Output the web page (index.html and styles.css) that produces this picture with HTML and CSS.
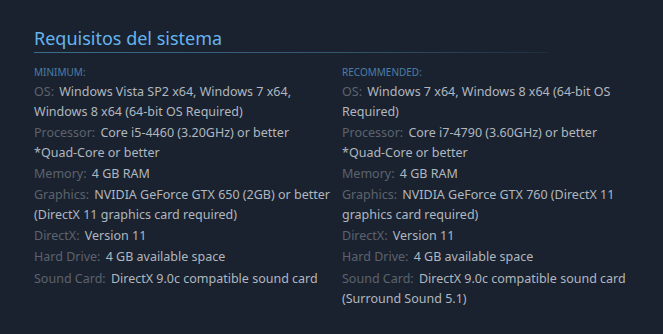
FILE: index.html
```html
<!DOCTYPE html>
<html lang="es">
<head>
<meta charset="utf-8">
<link rel="stylesheet" href="styles.css">
</head>
<body>
<section class="sysreq">
  <h2 class="sysreq-title">Requisitos del sistema</h2>
  <div class="sysreq-cols">
    <div class="sysreq-col">
      <div class="sysreq-head">Minimum:</div>
      <ul class="sysreq-list">
        <li><span class="lbl">OS:</span> Windows Vista SP2 x64, Windows 7 x64, Windows 8 x64 (64-bit OS Required)</li>
        <li><span class="lbl">Processor:</span> Core i5-4460 (3.20GHz) or better<br>*Quad-Core or better</li>
        <li><span class="lbl">Memory:</span> 4 GB RAM</li>
        <li><span class="lbl">Graphics:</span> NVIDIA GeForce GTX 650 (2GB) or better (DirectX 11 graphics card required)</li>
        <li><span class="lbl">DirectX:</span> Version 11</li>
        <li><span class="lbl">Hard Drive:</span> 4 GB available space</li>
        <li class="last"><span class="lbl">Sound Card:</span> DirectX 9.0c compatible sound card</li>
      </ul>
    </div>
    <div class="sysreq-col">
      <div class="sysreq-head">Recommended:</div>
      <ul class="sysreq-list">
        <li><span class="lbl">OS:</span> Windows 7 x64, Windows 8 x64 (64-bit OS Required)</li>
        <li><span class="lbl">Processor:</span> Core i7-4790 (3.60GHz) or better<br>*Quad-Core or better</li>
        <li><span class="lbl">Memory:</span> 4 GB RAM</li>
        <li><span class="lbl">Graphics:</span> NVIDIA GeForce GTX 760 (DirectX 11 graphics card required)</li>
        <li><span class="lbl">DirectX:</span> Version 11</li>
        <li><span class="lbl">Hard Drive:</span> 4 GB available space</li>
        <li class="last"><span class="lbl">Sound Card:</span> DirectX 9.0c compatible sound card (Surround Sound 5.1)</li>
      </ul>
    </div>
  </div>
</section>
</body>
</html>
```

FILE: styles.css
```css
html, body {
  margin: 0;
  padding: 0;
  background: #1a2230;
  height: 100%;
}
body {
  font-family: "Noto Sans", "Liberation Sans", Arial, sans-serif;
}
.sysreq {
  padding: 25px 21px 0 34px;
}
.sysreq-title {
  margin: 0;
  font-weight: normal;
  font-size: 18px;
  line-height: 26px;
  color: #66b4ec;
  width: 514px;
  padding-bottom: 1px;
  border-bottom: 1px solid transparent;
  border-image: linear-gradient(to right, #3d6c8c 0%, #34566f 60%, rgba(52,86,111,0.2) 100%) 1;
}
.sysreq-cols {
  display: flex;
  gap: 8px;
  margin-top: 9px;
}
.sysreq-col {
  width: 300px;
}
.sysreq-head {
  text-transform: uppercase;
  font-size: 10px;
  line-height: 20px;
  color: #4b7fa6;
}
.sysreq-list {
  list-style: none;
  margin: 0;
  padding: 0;
  font-size: 12.5px;
  line-height: 20px;
  color: #b0b7bf;
}
.sysreq-list li {
  margin-bottom: 1px;
}
.sysreq-list li.last {
  margin-top: 2px;
}
.lbl {
  color: #5d636d;
  margin-right: 2px;
}
```
